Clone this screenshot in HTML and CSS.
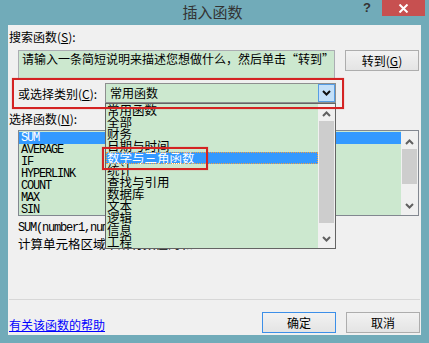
FILE: index.html
```html
<!DOCTYPE html>
<html lang="zh-CN">

<head>
    <meta charset="UTF-8">
    <title>插入函数</title>
    <link rel="stylesheet" href="styles.css">
</head>

<body>
    <div class="window">
        <div class="titlebar">
            <span class="title">插入函数</span>
            <span class="help">?</span>
            <span class="close">
                <svg width="11" height="9" viewBox="0 0 11 9"><path d="M1.5 0.5 L9.5 8.5 M9.5 0.5 L1.5 8.5" stroke="#fff" stroke-width="2" fill="none"/></svg>
            </span>
        </div>

        <div class="panel">
            <div class="label search-label">搜索函数(<u>S</u>):</div>
            <div class="search-row">
                <div class="search-box">请输入一条简短说明来描述您想做什么，然后单击“转到”</div>
                <button class="btn go">转到(<u>G</u>)</button>
            </div>

            <div class="cat-row">
                <span class="label cat-label">或选择类别(<u>C</u>):</span>
                <div class="combo">
                    <span class="combo-value">常用函数</span>
                    <span class="combo-btn">
                        <svg width="9" height="6" viewBox="0 0 9 6"><path d="M1 1 L4.5 4.5 L8 1" stroke="#111" stroke-width="2" fill="none"/></svg>
                    </span>
                    <div class="dropdown">
                        <ul class="dd-list">
                            <li>常用函数</li>
                            <li>全部</li>
                            <li>财务</li>
                            <li>日期与时间</li>
                            <li class="selected">数学与三角函数</li>
                            <li>统计</li>
                            <li>查找与引用</li>
                            <li>数据库</li>
                            <li>文本</li>
                            <li>逻辑</li>
                            <li>信息</li>
                            <li>工程</li>
                        </ul>
                        <div class="scrollbar dd-scroll">
                            <svg class="arrow up" width="9" height="6" viewBox="0 0 9 6"><path d="M1 5 L4.5 1.5 L8 5" stroke="#606060" stroke-width="2" fill="none"/></svg>
                            <div class="thumb"></div>
                            <svg class="arrow down" width="9" height="6" viewBox="0 0 9 6"><path d="M1 1 L4.5 4.5 L8 1" stroke="#606060" stroke-width="2" fill="none"/></svg>
                        </div>
                    </div>
                </div>
            </div>

            <div class="label fn-label">选择函数(<u>N</u>):</div>
            <div class="fn-list">
                <ul class="fn-items">
                    <li class="selected">SUM</li>
                    <li>AVERAGE</li>
                    <li>IF</li>
                    <li>HYPERLINK</li>
                    <li>COUNT</li>
                    <li>MAX</li>
                    <li>SIN</li>
                </ul>
                <div class="scrollbar fn-scroll">
                    <svg class="arrow up" width="9" height="6" viewBox="0 0 9 6"><path d="M1 5 L4.5 1.5 L8 5" stroke="#606060" stroke-width="2" fill="none"/></svg>
                    <div class="thumb"></div>
                    <svg class="arrow down" width="9" height="6" viewBox="0 0 9 6"><path d="M1 1 L4.5 4.5 L8 1" stroke="#606060" stroke-width="2" fill="none"/></svg>
                </div>
            </div>

            <div class="syntax">SUM(number1,number2,...)</div>
            <div class="desc">计算单元格区域中所有数值的和</div>

            <div class="separator"></div>

            <div class="footer">
                <a href="#" class="help-link">有关该函数的帮助</a>
                <div class="buttons">
                    <button class="btn ok">确定</button>
                    <button class="btn">取消</button>
                </div>
            </div>
        </div>

        <!-- annotation boxes -->
        <div class="mark mark-cat"></div>
        <div class="mark mark-item"></div>
    </div>
</body>

</html>
```

FILE: styles.css
```css
body {
    margin: 0;
    background: #71abb9;
    font-family: "Noto Sans CJK SC", "Liberation Sans", sans-serif;
    font-size: 12px;
    color: #000;
}

.window {
    position: relative;
    width: 429px;
    height: 343px;
    overflow: hidden;
}

.titlebar {
    position: relative;
    height: 25px;
    display: flex;
    justify-content: center;
}

.title {
    font-size: 15px;
    line-height: 24px;
    color: #333;
    margin-left: -4px;
}

.help {
    position: absolute;
    left: 363px;
    top: 0;
    font-family: "Liberation Sans", sans-serif;
    font-weight: bold;
    font-size: 13px;
    line-height: 16px;
    color: #333;
}

.close {
    position: absolute;
    left: 382px;
    top: 0;
    width: 43px;
    height: 16px;
    background: #c75050;
    display: flex;
    align-items: center;
    justify-content: center;
}

.panel {
    margin: 0 8px;
    height: 310px;
    background: #f0f0f0;
    padding-left: 1px;
    box-sizing: border-box;
}

.label {
    line-height: 14px;
    white-space: nowrap;
}

.label u,
.btn u {
    text-decoration: underline;
}

.search-label {
    height: 25px;
    padding-top: 5px;
    box-sizing: border-box;
}

.search-row {
    display: flex;
    height: 28px;
    margin-left: 9px;
}

.search-box {
    width: 317px;
    box-sizing: border-box;
    background: #cce8cf;
    border: 1px solid #abadb3;
    border-bottom: none;
    padding: 1px 0 0 3px;
    line-height: 14px;
    white-space: nowrap;
    overflow: hidden;
}

.btn {
    font-family: "Noto Sans CJK SC", "Liberation Sans", sans-serif;
    font-size: 12px;
    width: 74px;
    height: 21px;
    padding: 0;
    border: 1px solid #adadad;
    background: linear-gradient(#f2f2f2, #e4e4e4);
    color: #000;
    line-height: 18px;
}

.go {
    margin-left: 10px;
}

.cat-row {
    display: flex;
    align-items: center;
    margin-top: 5px;
    margin-left: 9px;
    height: 20px;
}

.cat-label {
    width: 87px;
    padding-top: 1px;
}

.combo {
    position: relative;
    width: 231px;
    height: 20px;
    box-sizing: border-box;
    border: 1px solid #8e8f8f;
    background: #cce8cf;
    display: flex;
    align-items: center;
}

.combo-value {
    flex: 1;
    padding-left: 4px;
    line-height: 16px;
}

.combo-btn {
    width: 17px;
    height: 18px;
    box-sizing: border-box;
    border: 1px solid #569de5;
    background: #c4e0f9;
    display: flex;
    align-items: center;
    justify-content: center;
}

.dropdown {
    position: absolute;
    left: -1px;
    top: 19px;
    width: 231px;
    height: 146px;
    box-sizing: border-box;
    border: 1px solid #646464;
    background: #cce8cf;
    display: flex;
    z-index: 2;
}

.dd-list,
.fn-items {
    list-style: none;
    margin: 0;
    padding: 0;
    flex: 1;
}

.dd-list li {
    height: 12px;
    line-height: 12px;
    font-size: 12.5px;
    padding-left: 1px;
    white-space: nowrap;
}

.dd-list li.selected {
    background: #3399ff;
    color: #fff;
    outline: 1px dotted #f5a040;
    outline-offset: -1px;
}

.scrollbar {
    position: relative;
    width: 17px;
    background: #f0f0f0;
}

.scrollbar .arrow {
    position: absolute;
    left: 4px;
}

.scrollbar .thumb {
    position: absolute;
    left: 1px;
    right: 1px;
    background: #cdcdcd;
}

.dd-scroll .up {
    top: 7px;
}

.dd-scroll .thumb {
    top: 17px;
    height: 102px;
}

.dd-scroll .down {
    bottom: 6px;
}

.fn-label {
    height: 27px;
    padding-top: 9px;
    box-sizing: border-box;
}

.fn-list {
    margin-left: 9px;
    width: 401px;
    height: 86px;
    box-sizing: border-box;
    border: 1px solid #828790;
    background: #cce8cf;
    display: flex;
}

.fn-items {
    padding-top: 1px;
}

.fn-items li {
    height: 12px;
    line-height: 12px;
    font-family: "Liberation Mono", monospace;
    font-size: 12px;
    padding-left: 2px;
    letter-spacing: -1.2px;
}

.fn-items li.selected {
    background: #3399ff;
    color: #fff;
}

.fn-scroll .up {
    top: 8px;
}

.fn-scroll .thumb {
    top: 18px;
    height: 35px;
}

.fn-scroll .down {
    bottom: 6px;
}

.syntax {
    margin: 6px 0 0 9px;
    font-family: "Liberation Mono", monospace;
    font-size: 12px;
    letter-spacing: -1.2px;
    line-height: 12px;
}

.desc {
    margin: 2px 0 0 9px;
    line-height: 16px;
    font-size: 12.5px;
}

.separator {
    margin: 47px 0 0 0;
    width: 411px;
    height: 1px;
    background: #d7d7d7;
}

.footer {
    display: flex;
    justify-content: space-between;
    align-items: center;
    margin-top: 12px;
}

.help-link {
    color: #0000ff;
    text-decoration: underline;
    line-height: 14px;
    padding-top: 4px;
}

.buttons {
    display: flex;
    gap: 10px;
    margin-right: 1px;
}

.ok {
    border-color: #3c8fe8;
}

.mark {
    position: absolute;
    border: 2px solid #d42323;
    box-shadow: 0 0 1px rgba(212, 35, 35, 0.5);
    z-index: 3;
}

.mark-cat {
    left: 12px;
    top: 78px;
    width: 328px;
    height: 27px;
}

.mark-item {
    left: 102px;
    top: 147px;
    width: 102px;
    height: 19px;
}
```
